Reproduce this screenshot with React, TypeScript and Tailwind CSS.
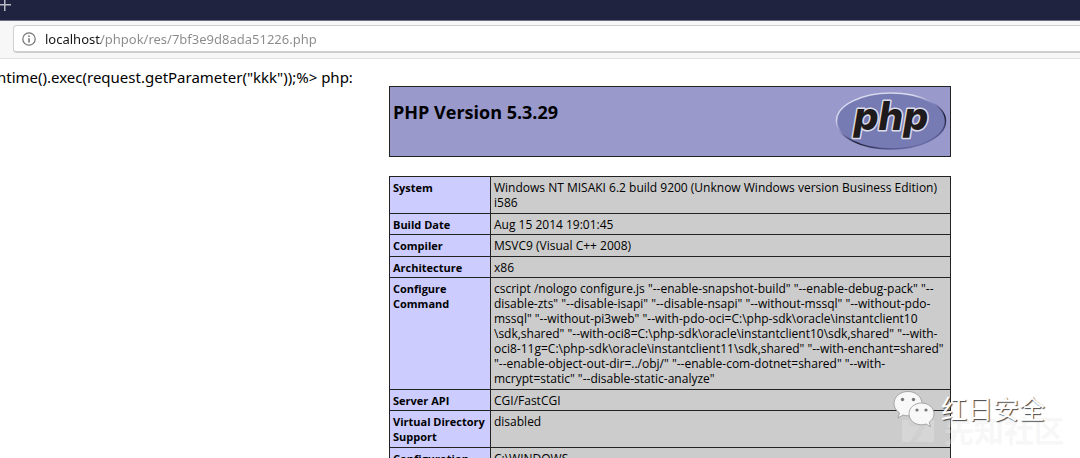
import type { ReactNode } from "react";

type Row = { label: ReactNode; lines: string[] };

const rows: Row[] = [
  {
    label: "System",
    lines: ["Windows NT MISAKI 6.2 build 9200 (Unknow Windows version Business Edition)", "i586"],
  },
  { label: "Build Date", lines: ["Aug 15 2014 19:01:45"] },
  { label: "Compiler", lines: ["MSVC9 (Visual C++ 2008)"] },
  { label: "Architecture", lines: ["x86"] },
  {
    label: (
      <>
        Configure
        <br />
        Command
      </>
    ),
    lines: [
      'cscript /nologo configure.js "--enable-snapshot-build" "--enable-debug-pack" "--',
      'disable-zts" "--disable-isapi" "--disable-nsapi" "--without-mssql" "--without-pdo-',
      'mssql" "--without-pi3web" "--with-pdo-oci=C:\\php-sdk\\oracle\\instantclient10',
      '\\sdk,shared" "--with-oci8=C:\\php-sdk\\oracle\\instantclient10\\sdk,shared" "--with-',
      'oci8-11g=C:\\php-sdk\\oracle\\instantclient11\\sdk,shared" "--with-enchant=shared"',
      '"--enable-object-out-dir=../obj/" "--enable-com-dotnet=shared" "--with-',
      'mcrypt=static" "--disable-static-analyze"',
    ],
  },
  { label: "Server API", lines: ["CGI/FastCGI"] },
  {
    label: (
      <>
        Virtual Directory
        <br />
        Support
      </>
    ),
    lines: ["disabled"],
  },
  { label: "Configuration", lines: ["C:\\WINDOWS"] },
];

function PhpLogo() {
  return (
    <svg className="h-[60px] w-[114px]" viewBox="0 0 114 60" role="img" aria-label="PHP logo">
      <defs>
        <linearGradient id="rim" x1="0.2" y1="0" x2="0.8" y2="1">
          <stop offset="0" stopColor="#d4d5ec" />
          <stop offset="0.25" stopColor="#d9daee" />
          <stop offset="0.45" stopColor="#8587bb" />
          <stop offset="0.65" stopColor="#1b1b33" />
          <stop offset="0.85" stopColor="#50528a" />
          <stop offset="1" stopColor="#7a7eb8" />
        </linearGradient>
      </defs>
      <ellipse cx="58" cy="31" rx="54.5" ry="28" fill="#777bb4" stroke="url(#rim)" strokeWidth="1.500" />
      <text
        x="58"
        y="40"
        textAnchor="middle"
        className="font-['Inter',sans-serif] text-[39px] font-extrabold italic"
        fill="#1f1b1d"
        stroke="#dcdcea"
        strokeWidth="3"
        strokeLinejoin="round"
        paintOrder="stroke"
      >
        php
      </text>
    </svg>
  );
}

function ChatBubbles() {
  return (
    <svg className="h-[38px] w-[42px] shrink-0" viewBox="0 0 42 38" aria-hidden="true">
      <g fill="#f8f8f8" stroke="#969696" strokeWidth="0.8">
        <path d="M15 1.5C7.2 1.5 1 6.800 1 13.500c0 4 2.200 7.200 5.500 9.400L5 28l5-3c1.600.5 3.300.8 5 .8 7.800 0 14-5.300 14-12.100S22.800 1.500 15 1.500Z" />
        <path d="M28.500 13C21.500 13 16 17.800 16 23.900s5.500 10.900 12.500 10.900c1.600 0 3.100-.3 4.500-.8l4.500 2.700-1.300-4.500c2.900-2 4.800-5 4.800-8.300C41 17.800 35.500 13 28.500 13Z" />
      </g>
      <g fill="#777777">
        <circle cx="9.500" cy="9.500" r="1.700" />
        <circle cx="20.500" cy="9.500" r="1.700" />
        <circle cx="24" cy="20" r="1.600" />
        <circle cx="33" cy="20" r="1.600" />
      </g>
    </svg>
  );
}

export default function App() {
  return (
    <div className="relative h-screen overflow-hidden bg-white font-['Open_Sans','Noto_Sans_CJK_SC',sans-serif] text-black">
      <header>
        <div className="h-[21px] border-b border-[#6d6d85] bg-[#1f2340]">
          <button type="button" aria-label="New tab" className="block">
            <svg className="h-3 w-3" viewBox="0 0 12 12" fill="none" stroke="#b9bac6" strokeWidth="1.500">
              <path d="M-1 4.750h12M4.750 -1v12" />
            </svg>
          </button>
        </div>
        <div className="border-b border-[#e0e0e0] bg-[#f7f7f7] pt-1 pb-[5px] pl-[13px]">
          <div className="flex h-7 items-center gap-[9px] rounded-l-sm border border-r-0 border-b-2 border-[#cfcfcf] bg-white pl-2">
            <svg className="h-[14px] w-[14px] shrink-0" viewBox="0 0 14 14" fill="none" stroke="#747474" aria-hidden="true">
              <circle cx="7" cy="7" r="6.200" strokeWidth="1.200" />
              <path d="M7 6.200v4.300M7 3.400v1.500" strokeWidth="1.600" />
            </svg>
            <input
              type="text"
              aria-label="Address"
              defaultValue="localhost/phpok/res/7bf3e9d8ada51226.php"
              className="min-w-0 flex-1 bg-[linear-gradient(90deg,#151515_56px,#8a8a8a_56px)] bg-clip-text font-['Noto_Sans',sans-serif] text-[13px] leading-6 text-transparent caret-black outline-none"
            />
          </div>
        </div>
      </header>

      <main>
        <p className="-ml-[3px] h-[27px] pt-[6px] font-['Noto_Sans',sans-serif] text-[15px] leading-6 whitespace-nowrap">
          ntime().exec(request.getParameter("kkk"));%&gt; php:
        </p>
        <div className="mr-[129px] ml-auto w-[562px]">
          <div className="flex h-[71px] items-start justify-between border border-[#222222] bg-[#9999cc] pt-[3px] pr-[3px] pl-[3px]">
            <h1 className="pt-[10px] text-lg leading-6 font-bold">PHP Version 5.3.29</h1>
            <PhpLogo />
          </div>
          <table className="mt-[19px] w-full table-fixed border-collapse text-[12px] leading-[15px]">
            <colgroup>
              <col className="w-[101px]" />
              <col />
            </colgroup>
            <tbody>
              {rows.map((row, i) => (
                <tr key={i} className="align-top odd:[&>*]:pb-[3px] even:[&>*]:pb-[2px]">
                  <th
                    scope="row"
                    className="border border-[#222222] bg-[#ccccff] px-[3px] pt-[3px] text-left text-[11px] font-bold whitespace-nowrap"
                  >
                    {row.label}
                  </th>
                  <td className="border border-[#222222] bg-[#cccccc] px-[3px] pt-[3px] whitespace-nowrap">
                    {row.lines.map((line) => (
                      <div key={line}>{line}</div>
                    ))}
                  </td>
                </tr>
              ))}
            </tbody>
          </table>
        </div>
      </main>

      <div className="pointer-events-none absolute top-[419px] right-[16px] flex items-center gap-[10px] text-[#e8e8e8]/35">
        <svg className="h-[22px] w-8" viewBox="0 0 32 22" aria-hidden="true">
          <path d="M0 0h32v22H0Z" fill="currentColor" />
          <path d="M7 0h20L14 22H8L18 6H7Z" fill="#cccccc" fillOpacity="0.6" />
        </svg>
        <span className="text-[30px] leading-6 font-bold">先知社区</span>
      </div>
      <div className="pointer-events-none absolute top-[390px] right-[35px] flex items-center gap-[6px]">
        <ChatBubbles />
        <span className="text-[26px] leading-9 text-white [text-shadow:1px_1px_1px_#444444]">红日安全</span>
      </div>
    </div>
  );
}
